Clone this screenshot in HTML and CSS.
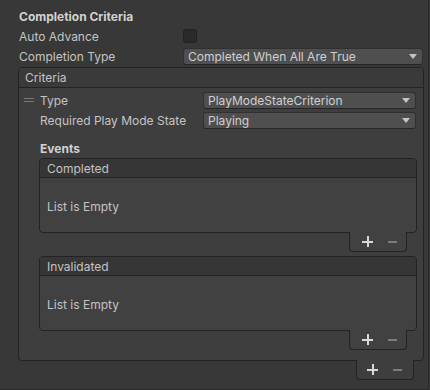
FILE: index.html
```html
<!DOCTYPE html>
<html>
<head>
<meta charset="utf-8">
<link rel="stylesheet" href="styles.css">
</head>
<body>
<div class="panel">
  <div class="row title">Completion Criteria</div>
  <div class="row">
    <span class="label">Auto Advance</span>
    <span class="checkbox"></span>
  </div>
  <div class="row">
    <span class="label">Completion Type</span>
    <div class="dropdown wide"><span>Completed When All Are True</span><i class="arrow"></i></div>
  </div>

  <div class="outer">
    <div class="box criteria">
      <div class="box-head">Criteria</div>
      <div class="box-body">
        <div class="crow">
          <span class="handle"><i></i><i></i></span>
          <span class="clabel">Type</span>
          <div class="dropdown inner"><span>PlayModeStateCriterion</span><i class="arrow"></i></div>
        </div>
        <div class="crow">
          <span class="handle blank"></span>
          <span class="clabel">Required Play Mode State</span>
          <div class="dropdown inner"><span>Playing</span><i class="arrow"></i></div>
        </div>
        <div class="events">Events</div>

        <div class="list">
          <div class="box lbox">
            <div class="lhead">Completed</div>
            <div class="lbody">List is Empty</div>
          </div>
          <div class="tab"><span class="plus"></span><span class="minus"></span></div>
        </div>

        <div class="list second">
          <div class="box lbox">
            <div class="lhead">Invalidated</div>
            <div class="lbody">List is Empty</div>
          </div>
          <div class="tab"><span class="plus"></span><span class="minus"></span></div>
        </div>
      </div>
    </div>
    <div class="tab outer-tab"><span class="plus"></span><span class="minus"></span></div>
  </div>
</div>
</body>
</html>
```

FILE: styles.css
```css
* { box-sizing: border-box; }
html, body { margin: 0; padding: 0; background: #383838; }
body {
  font-family: Inter, "Noto Sans", "DejaVu Sans", sans-serif;
  font-size: 12px;
  color: #c4c4c4;
}
.panel {
  width: 429px;
  height: 390px;
  padding-top: 6px;
  border-right: 1px solid #2a2a2a;
  border-bottom: 1px solid #2a2a2a;
}
.row {
  height: 20px;
  display: flex;
  align-items: center;
  padding-left: 19px;
}
.title { font-weight: 700; color: #d2d2d2; }
.label { width: 164px; flex: none; }
.checkbox {
  width: 14px; height: 14px;
  background: #2a2a2a;
  border: 1px solid #222;
  border-radius: 3px;
}
.dropdown {
  height: 17px;
  background: #4f4f4f;
  border: 1px solid #303030;
  border-bottom-color: #262626;
  border-radius: 3px;
  display: flex;
  align-items: center;
  padding-left: 4px;
  padding-right: 5px;
  color: #d0d0d0;
}
.dropdown span { flex: 1; }
.arrow {
  width: 0; height: 0;
  border-left: 4.5px solid transparent;
  border-right: 4.5px solid transparent;
  border-top: 5px solid #c4c4c4;
}
.wide { width: 240px; }

.outer {
  padding-left: 18px;
  width: 424px;
  margin-top: 1px;
  display: flex;
  flex-direction: column;
}
.box {
  border: 1px solid #232323;
  border-radius: 4px;
}
.criteria { background: #3e3e3e; position: relative; }
.box-head {
  height: 20px;
  background: #3a3a3a;
  border-bottom: 1px solid #232323;
  border-radius: 3px 3px 0 0;
  padding-left: 6px;
  display: flex;
  align-items: center;
}
.box-body {
  padding: 2px 6px 10px 0;
}
.crow {
  height: 20px;
  display: flex;
  align-items: center;
}
.handle {
  width: 21px;
  flex: none;
  display: flex;
  flex-direction: column;
  gap: 2px;
  padding-left: 5px;
  padding-right: 6px;
}
.handle i { display: block; height: 1px; background: #777; }
.handle.blank { height: 1px; }
.clabel { width: 163px; flex: none; }
.inner { width: 213px; }
.events {
  height: 19px;
  margin-top: 9px;
  padding-left: 21px;
  font-weight: 700;
  color: #d2d2d2;
  display: flex;
  align-items: center;
}
.list {
  margin-left: 20px;
  display: flex;
  flex-direction: column;
}
.list.second { margin-top: 4px; }
.lbox { background: #414141; }
.lhead {
  height: 19px;
  background: #363636;
  border-bottom: 1px solid #232323;
  border-radius: 3px 3px 0 0;
  padding-left: 7px;
  display: flex;
  align-items: center;
}
.lbody {
  height: 54px;
  padding-left: 7px;
  padding-top: 2px;
  display: flex;
  align-items: center;
}
.tab {
  align-self: flex-end;
  margin-right: 10px;
  margin-top: -1px;
  width: 58px;
  height: 20px;
  background: #414141;
  border: 1px solid #232323;
  border-top: none;
  border-radius: 0 0 4px 4px;
  position: relative;
  z-index: 1;
  display: flex;
  align-items: center;
  padding-left: 12px;
  gap: 14px;
}
.outer-tab { background: #3e3e3e; padding-left: 10px; }
.plus, .minus {
  width: 11px; height: 11px;
  position: relative;
  display: block;
}
.plus::before, .plus::after, .minus::before {
  content: "";
  position: absolute;
  background: #d8d8d8;
}
.plus::before { left: 0; right: 0; top: 4.5px; height: 2px; }
.plus::after { top: 0; bottom: 0; left: 4.5px; width: 2px; }
.minus::before { left: 1px; right: 1px; top: 5px; height: 1.5px; background: #7c7c7c; }
```
